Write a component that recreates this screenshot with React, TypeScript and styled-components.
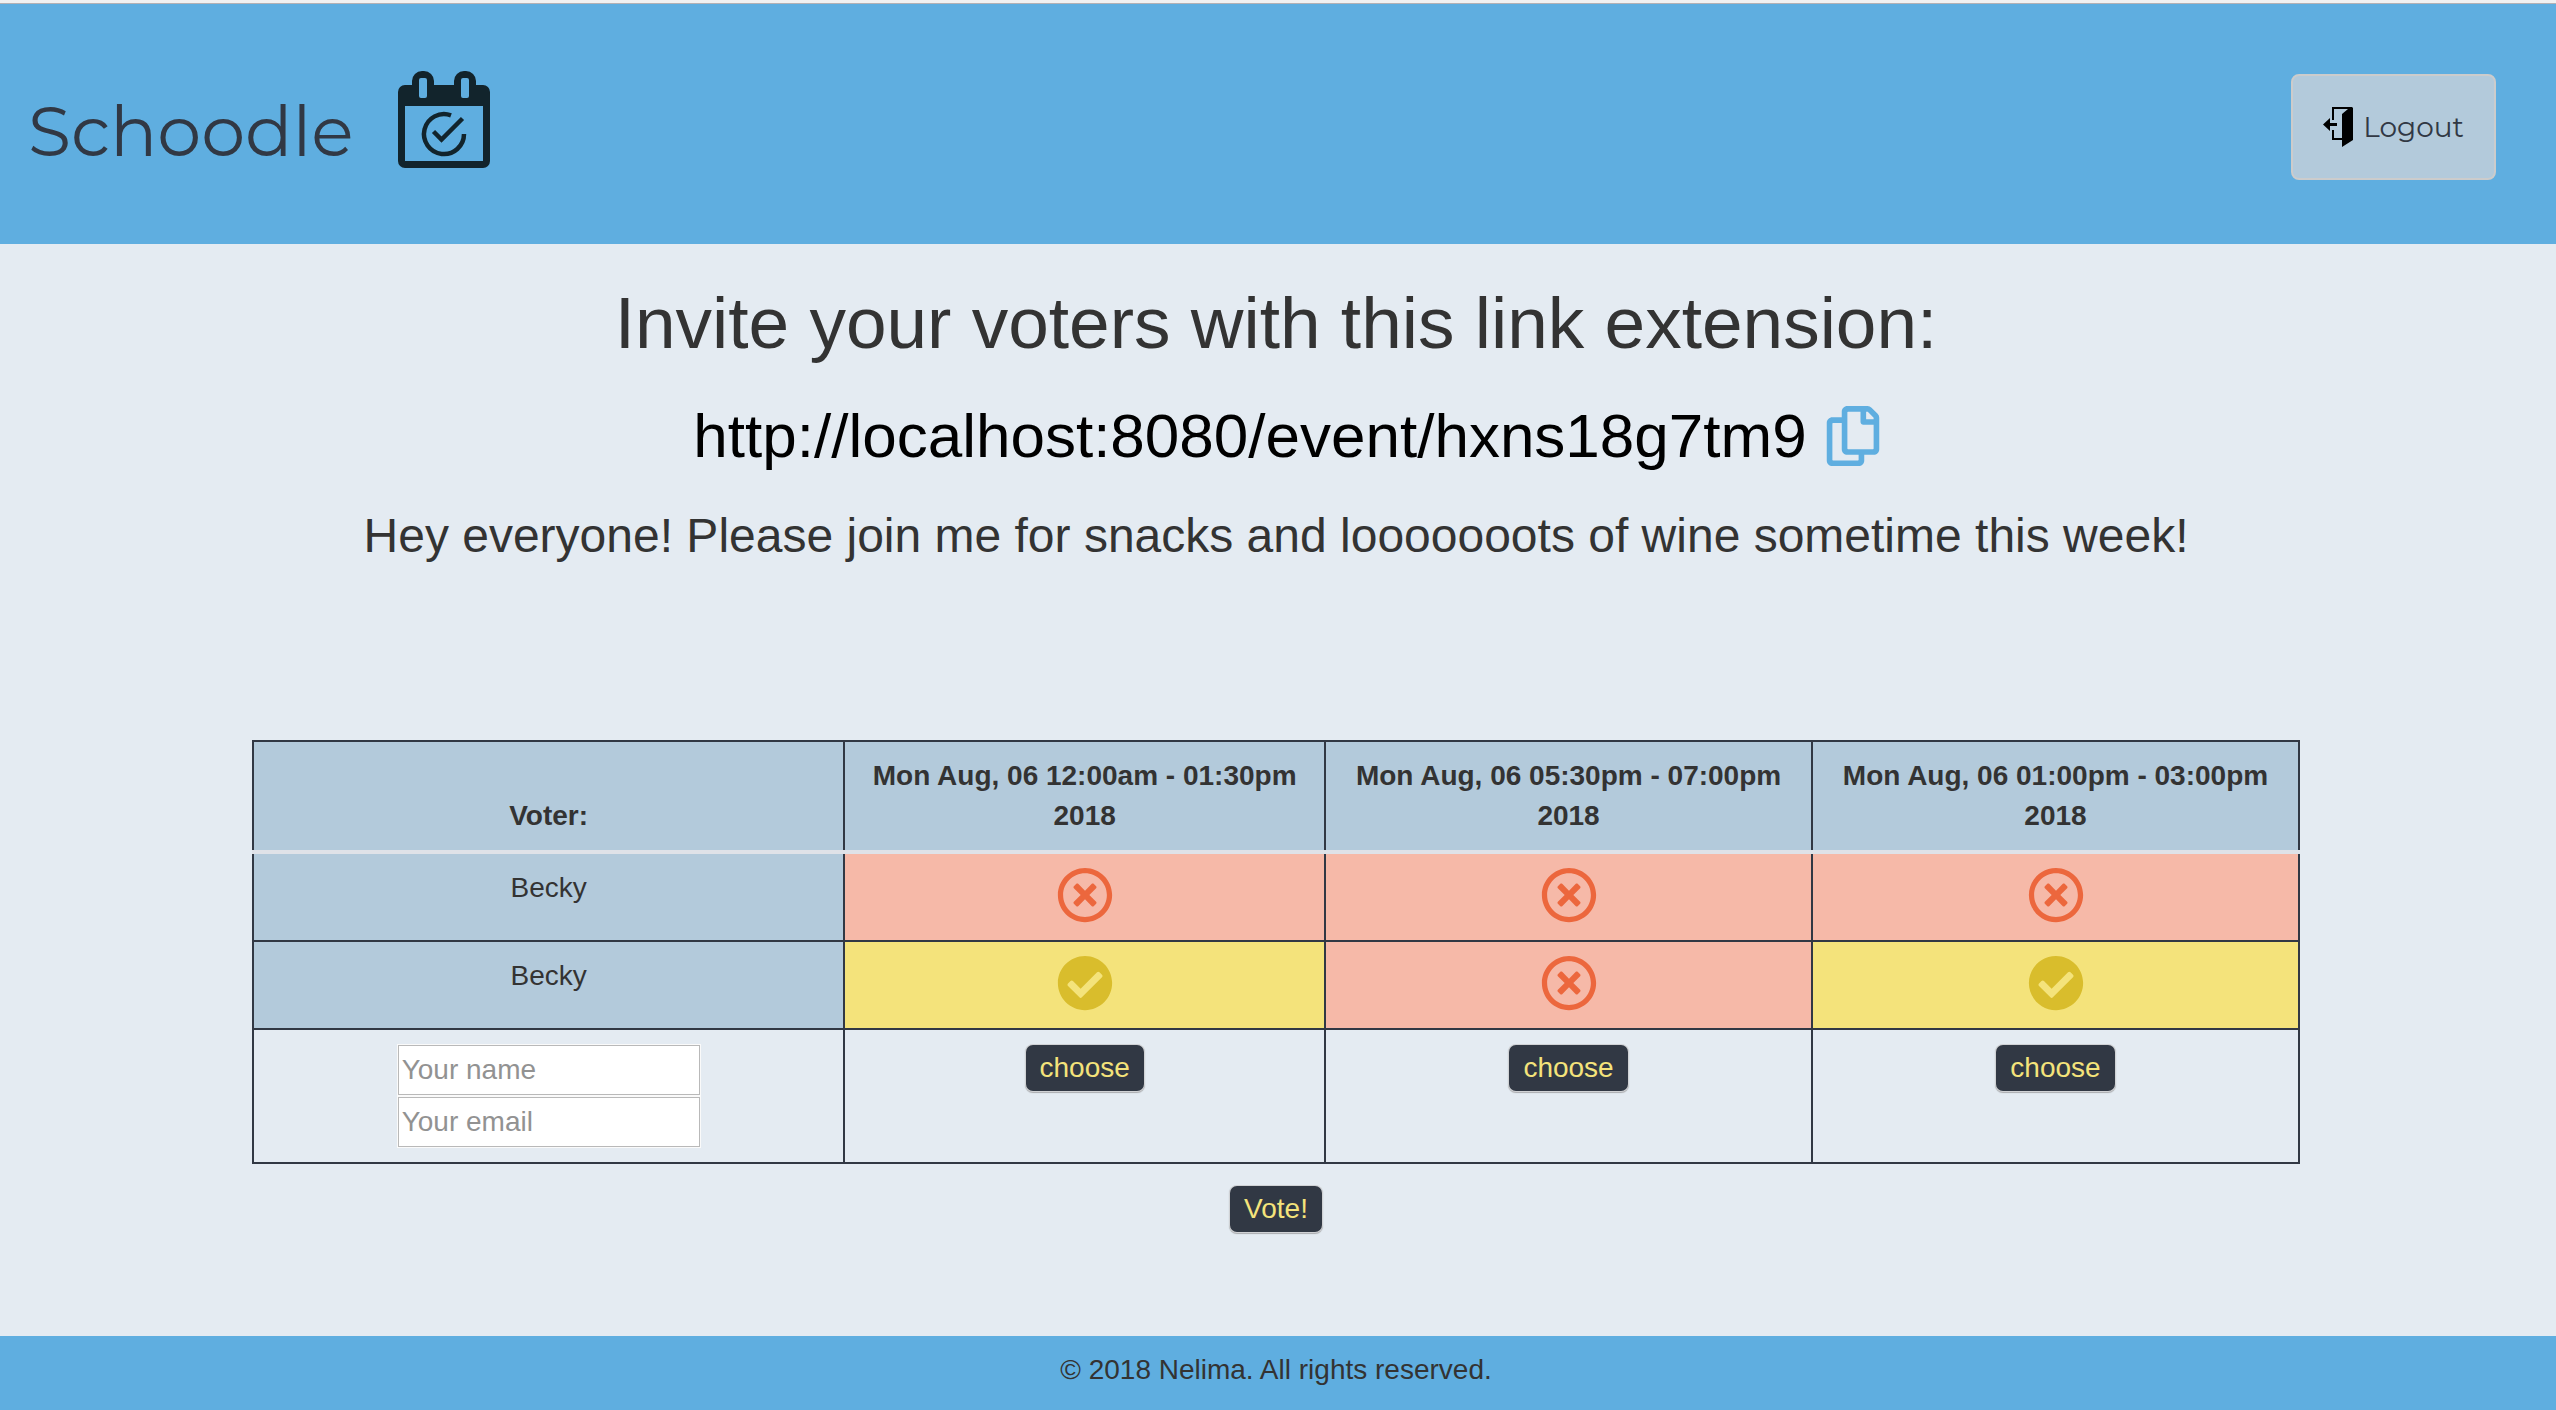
import React from "react";
import styled, { createGlobalStyle } from "styled-components";
import { FaRegCopy, FaRegTimesCircle, FaCheckCircle } from "react-icons/fa";

const ink = "#313844";
const sky = "#5faee0";
const mist = "#b3cadb";
const butter = "#f4e37b";

const GlobalStyle = createGlobalStyle`
  *, *::before, *::after { box-sizing: border-box; }
  html { background: #e4ebf2; }
  body {
    margin: 0;
    color: #333;
    background: #e4ebf2;
    font-family: "Helvetica Neue", "Liberation Sans", Arial, sans-serif;
    font-size: 28px;
    line-height: 40px;
  }
`;

const Page = styled.div`
  display: flex;
  flex-direction: column;
  min-height: 100vh;
`;

const Header = styled.header`
  display: flex;
  justify-content: space-between;
  align-items: flex-start;
  height: 244px;
  padding: 68px 60px 0 28px;
  background: ${sky};
  border-top: 3px solid #f1f1f1;
  box-shadow: inset 0 1px 0 #b3b1b5;
`;

const Brand = styled.a`
  display: flex;
  align-items: flex-start;
  gap: 44px;
  color: ${ink};
  font-family: Montserrat, Inter, sans-serif;
  font-size: 70px;
  font-weight: 400;
  line-height: 80px;
  text-decoration: none;
`;

const BrandName = styled.span`
  padding-top: 20px;
`;

const LogoutButton = styled.button`
  display: flex;
  align-items: center;
  gap: 10px;
  height: 106px;
  margin-top: 3px;
  padding: 0 30px;
  color: ${ink};
  background: ${mist};
  border: 2px solid #ccc;
  border-radius: 8px;
  font-family: Montserrat, Inter, sans-serif;
  font-size: 28px;
  line-height: 40px;
`;

const Main = styled.main`
  flex: 1;
  display: flex;
  flex-direction: column;
  align-items: center;
  padding: 39px 256px 0 252px;
  text-align: center;
`;

const Title = styled.h1`
  margin: 0;
  font-size: 73px;
  font-weight: 400;
  line-height: 80px;
`;

const LinkRow = styled.div`
  display: flex;
  align-items: center;
  gap: 16px;
  margin-top: 33px;
  padding-left: 24px;
`;

const EventLink = styled.a`
  color: #000;
  font-size: 62px;
  line-height: 80px;
  text-decoration: none;
`;

const CopyButton = styled.button`
  display: flex;
  padding: 0;
  color: ${sky};
  background: none;
  border: 0;
  font-size: 60px;
`;

const Description = styled.p`
  margin: 30px 0 0;
  font-size: 48px;
  line-height: 60px;
  white-space: nowrap;
`;

const Form = styled.form`
  display: flex;
  flex-direction: column;
  align-items: center;
  gap: 22px;
  width: 100%;
  margin-top: 174px;
`;

const Table = styled.table`
  width: 100%;
  table-layout: fixed;
  border-collapse: collapse;
`;

const Column = styled.col<{ $width: string }>`
  width: ${(p) => p.$width};
`;

const HeadCell = styled.th`
  padding: 14px 16px;
  vertical-align: bottom;
  background: ${mist};
  border: 2px solid ${ink};
  border-bottom: 4px solid #dfe2e8;
`;

const NameCell = styled.td`
  padding: 14px 16px;
  vertical-align: top;
  background: ${mist};
  border: 2px solid ${ink};
`;

const VoteCell = styled.td<{ $yes: boolean }>`
  padding: 13px 16px 17px;
  color: ${(p) => (p.$yes ? "#d9bd2c" : "#ec673d")};
  background: ${(p) => (p.$yes ? butter : "#f6b9a8")};
  border: 2px solid ${ink};
  font-size: 56px;

  svg {
    display: block;
    margin: 0 auto;
  }
`;

const EntryCell = styled.td`
  padding: 15px 16px;
  vertical-align: top;
  border: 2px solid ${ink};
`;

const Fields = styled.div`
  display: flex;
  flex-direction: column;
  align-items: center;
  gap: 2px;
`;

const Field = styled.input`
  width: 302px;
  height: 50px;
  padding: 0 3px;
  color: #333;
  background: #fff;
  border: 1px solid #b9b9b9;
  border-radius: 0;
  box-shadow: 0 0 0 1px #fafafa;
  font: inherit;

  &::placeholder {
    color: #929292;
    opacity: 1;
  }
`;

const DarkButton = styled.button`
  height: 46px;
  padding: 0 14px;
  color: ${butter};
  background: ${ink};
  border: 0;
  border-radius: 7px;
  box-shadow: 0 0 0 1px #d0d2d5, 0 1px 1px 1px #a9abae;
  font: inherit;
  line-height: 46px;
  vertical-align: top;
`;

const Footer = styled.footer`
  height: 74px;
  padding: 14px 4px 0 0;
  background: ${sky};
  text-align: center;
`;

function CalendarLogo() {
  return (
    <svg width="92" height="97" viewBox="0 0 92 97" fill="none" aria-hidden="true">
      <path
        fill="#12242c"
        fillRule="evenodd"
        d="M7 14H14V10A10 10 0 0 1 24 0H26A10 10 0 0 1 36 10V14H56V10A10 10 0 0 1 66 0H68A10 10 0 0 1 78 10V14H85A7 7 0 0 1 92 21V90A7 7 0 0 1 85 97H7A7 7 0 0 1 0 90V21A7 7 0 0 1 7 14ZM23 7A2 2 0 0 0 21 9V25A2 2 0 0 0 23 27H27A2 2 0 0 0 29 25V9A2 2 0 0 0 27 7ZM65 7A2 2 0 0 0 63 9V25A2 2 0 0 0 65 27H69A2 2 0 0 0 71 25V9A2 2 0 0 0 69 7ZM7 35V90H85V35Z"
      />
      <path
        stroke="#12242c"
        strokeWidth="4.500"
        d="M53 44.3A20 20 0 1 0 66 63M35.5 60.5L43.5 68.5L64.500 47.500"
      />
    </svg>
  );
}

function DoorIcon() {
  return (
    <svg width="30" height="40" viewBox="0 0 30 40" fill="#000" aria-hidden="true">
      <path d="M9 0H29L30 1V33L19 40V7L25 2H11V13H9ZM9 23H11V31H19V33H9Z" />
      <path d="M0 17.500L7 11V16H14V19H7V24Z" />
    </svg>
  );
}

const columnWidths = ["28.9%", "23.5%", "23.8%", "23.8%"];

const slots = [
  "Mon Aug, 06 12:00am - 01:30pm 2018",
  "Mon Aug, 06 05:30pm - 07:00pm 2018",
  "Mon Aug, 06 01:00pm - 03:00pm 2018",
];

const voters = [
  { name: "Becky", votes: [false, false, false] },
  { name: "Becky", votes: [true, false, true] },
];

export default function App() {
  return (
    <>
      <GlobalStyle />
      <Page>
        <Header>
          <Brand href="#">
            <BrandName>Schoodle</BrandName>
            <CalendarLogo />
          </Brand>
          <LogoutButton type="button">
            <DoorIcon />
            Logout
          </LogoutButton>
        </Header>
        <Main>
          <Title>Invite your voters with this link extension:</Title>
          <LinkRow>
            <EventLink href="#">http://localhost:8080/event/hxns18g7tm9</EventLink>
            <CopyButton type="button" aria-label="Copy link">
              <FaRegCopy />
            </CopyButton>
          </LinkRow>
          <Description>
            Hey everyone! Please join me for snacks and looooooots of wine sometime this week!
          </Description>
          <Form onSubmit={(e) => e.preventDefault()}>
            <Table>
              <colgroup>
                {columnWidths.map((width, i) => (
                  <Column key={i} $width={width} />
                ))}
              </colgroup>
              <thead>
                <tr>
                  <HeadCell scope="col">Voter:</HeadCell>
                  {slots.map((slot) => (
                    <HeadCell scope="col" key={slot}>
                      {slot}
                    </HeadCell>
                  ))}
                </tr>
              </thead>
              <tbody>
                {voters.map((voter, row) => (
                  <tr key={row}>
                    <NameCell>{voter.name}</NameCell>
                    {voter.votes.map((yes, i) => (
                      <VoteCell key={i} $yes={yes}>
                        {yes ? <FaCheckCircle /> : <FaRegTimesCircle />}
                      </VoteCell>
                    ))}
                  </tr>
                ))}
                <tr>
                  <EntryCell>
                    <Fields>
                      <Field type="text" placeholder="Your name" aria-label="Your name" />
                      <Field type="email" placeholder="Your email" aria-label="Your email" />
                    </Fields>
                  </EntryCell>
                  {slots.map((slot) => (
                    <EntryCell key={slot}>
                      <DarkButton type="button">choose</DarkButton>
                    </EntryCell>
                  ))}
                </tr>
              </tbody>
            </Table>
            <DarkButton type="submit">Vote!</DarkButton>
          </Form>
        </Main>
        <Footer>© 2018 Nelima. All rights reserved.</Footer>
      </Page>
    </>
  );
}
